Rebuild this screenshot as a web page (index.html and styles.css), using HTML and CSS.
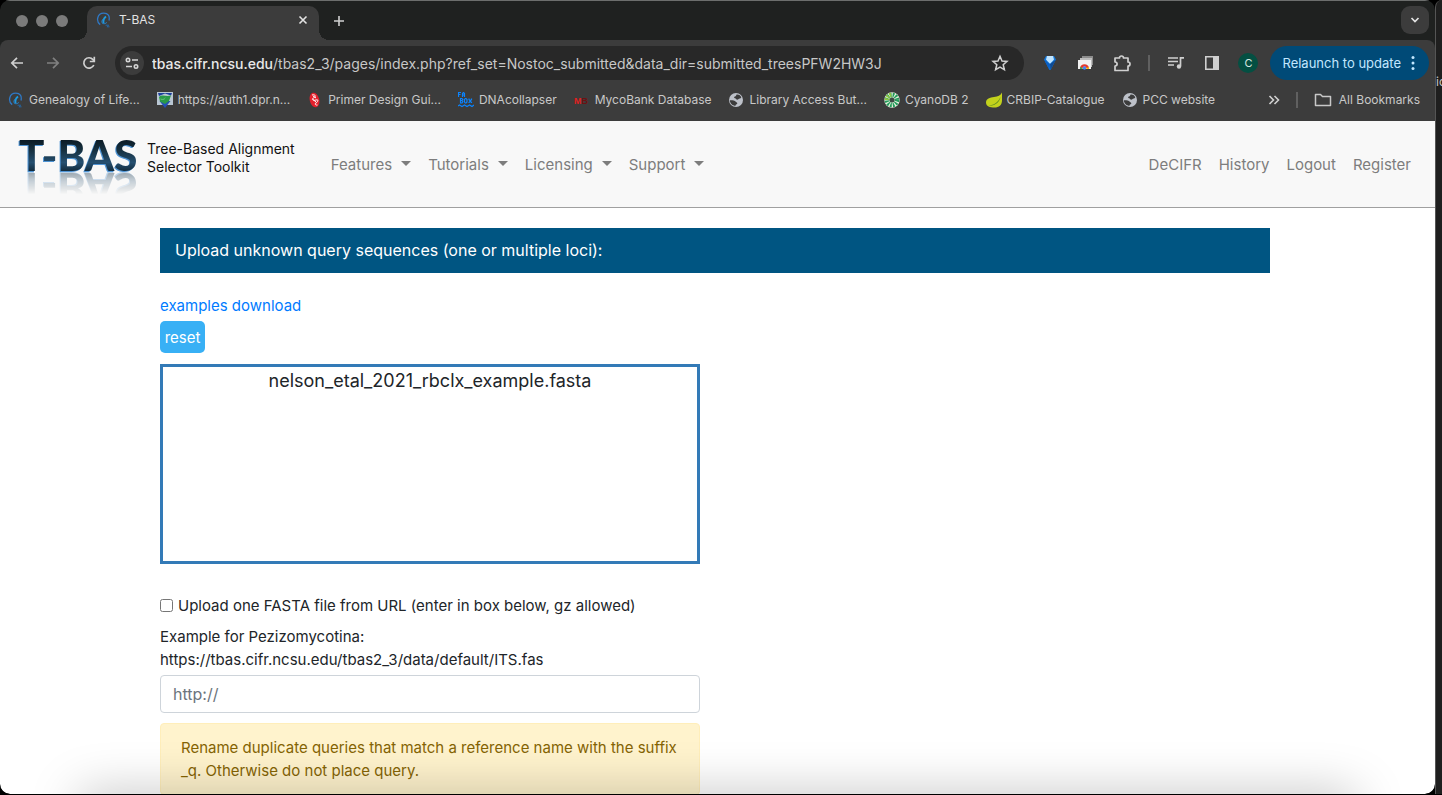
FILE: index.html
```html
<!DOCTYPE html>
<html lang="en">
<head>
<meta charset="utf-8">
<title>T-BAS</title>
<link rel="stylesheet" href="styles.css">
</head>
<body>
<svg class="defs" aria-hidden="true">
  <symbol id="swirl" viewBox="0 0 16 16"><path d="M4.200 12.600C-.2 9.500 1 1.200 7.800 1.200c4.400 0 6.200 3 5.200 7.300" fill="none" stroke="#2f78c4" stroke-width="1.300"/><path d="M10 4.500C8 6 7 8.500 7.600 11.400" fill="none" stroke="#1c9be0" stroke-width="1.800"/><path d="M7.300 7c-1.500 1.200-1.800 3-.8 4.300 1.500.8 3 .4 4.300-.8" fill="none" stroke="#2a86cc" stroke-width="1"/><path d="M9.500 13.200h3.200l-1.800 1.600h2.600" fill="none" stroke="#2466a4" stroke-width="1"/></symbol>
  <symbol id="globe" viewBox="0 0 16 16"><circle cx="8" cy="8" r="7" fill="#bdc1c9"/><path d="M8.600 2.600c2.300-.3 4.100 1.100 4.700 3-.8 1.300-2.200.8-3 1.600-.7.800-1.800.5-2.200-.2-.3-.8-2-.4-2-1.500 0-1.200 1.700-.8 1.900-1.700zM1.800 8.300c2.200-.1 4.900.1 6 1.500.6.800 1.800.8 1.500 1.800-.4 1-1.700.6-1.800 2.200-2.800 0-5.400-2.200-5.700-5.500z" fill="#3c3c3c"/></symbol>
</svg>
<div class="desktop">
  <div class="browser">
    <div class="tabstrip">
      <div class="lights"><span></span><span></span><span></span></div>
      <div class="tab">
        <svg class="fav"><use href="#swirl"/></svg>
        <span class="tab-title">T-BAS</span>
        <button class="ib close" aria-label="Close tab"><svg width="10" height="10" viewBox="0 0 10 10"><path d="M1.500 1.500l7 7M8.500 1.500l-7 7" stroke="#e3e3e3" stroke-width="1.600"/></svg></button>
      </div>
      <button class="ib newtab" aria-label="New tab"><svg width="12" height="12" viewBox="0 0 12 12"><path d="M6 1v10M1 6h10" stroke="#d0d0d0" stroke-width="1.600"/></svg></button>
      <button class="ib tabsearch" aria-label="Search tabs"><svg width="10" height="10" viewBox="0 0 10 10"><path d="M1.500 3L5 6.500 8.500 3" fill="none" stroke="#e3e3e3" stroke-width="1.700"/></svg></button>
    </div>
    <div class="toolbar">
      <div class="nav-buttons">
        <button class="ib" aria-label="Back"><svg width="16" height="16" viewBox="0 0 16 16"><path d="M14 8H3M8 2.800L2.800 8 8 13.200" fill="none" stroke="#d0d0d0" stroke-width="1.700"/></svg></button>
        <button class="ib" aria-label="Forward"><svg width="16" height="16" viewBox="0 0 16 16"><path d="M2 8h11M8 2.800L13.200 8 8 13.200" fill="none" stroke="#808080" stroke-width="1.700"/></svg></button>
        <button class="ib" aria-label="Reload"><svg width="16" height="16" viewBox="0 0 16 16"><path d="M12.800 10A5.200 5.200 0 1 1 12 4.600l1.300 1.500" fill="none" stroke="#d0d0d0" stroke-width="1.700"/><path d="M13.300 1.800v4.700H8.800" fill="none" stroke="#d0d0d0" stroke-width="1.700"/></svg></button>
      </div>
      <div class="omnibox">
        <button class="ib tune" aria-label="Site information"><svg width="14" height="14" viewBox="0 0 14 14"><g fill="none" stroke="#d6d6d6" stroke-width="1.600"><circle cx="3" cy="4" r="1.700"/><path d="M7 4h6M1 10.500h6"/><circle cx="11" cy="10.500" r="1.700"/></g></svg></button>
        <div class="url"><b>tbas.cifr.ncsu.edu</b>/tbas2_3/pages/index.php?ref_set=Nostoc_submitted&amp;data_dir=submitted_treesPFW2HW3J</div>
        <button class="ib star" aria-label="Bookmark this tab"><svg width="18" height="18" viewBox="0 0 18 18"><path d="M9 2.300l2 4.700 5 .4-3.800 3.300 1.200 5L9 13.100l-4.400 2.600 1.200-5L2 7.400 7 7z" fill="none" stroke="#d0d0d0" stroke-width="1.500"/></svg></button>
      </div>
      <div class="ext">
        <button class="ib" aria-label="Gem extension"><svg width="16" height="16" viewBox="0 0 16 16"><path d="M4 1h8l2 3.500L8.500 15h-1L2 4.500z" fill="#1377d8"/><path d="M5 1h6l1 3.500L8 9 4 4.500z" fill="#bfe4ff"/><path d="M2 4.500L8 9l-.5 6z" fill="#0a5fc4"/><path d="M8 9l6-4.500L8.500 15z" fill="#0d4a94"/></svg></button>
        <button class="ib" aria-label="Screen extension"><svg width="18" height="16" viewBox="0 0 18 16"><path d="M5 1h11v9H5z" fill="#8c8c8c"/><path d="M3 3h12v9H3z" fill="#bdbdbd"/><path d="M1 5h13v9H1z" fill="#f2f2f2"/><path d="M3 13a4.600 4.600 0 0 1 9 0l-2.500.5a2 2 0 0 0-4 0z" fill="#e33b2e"/><path d="M3 14v-2l2.500 1v1z" fill="#34a853"/><path d="M12 14v-2l-2.500 1v1z" fill="#fbbc05"/><circle cx="7.500" cy="13" r="1.700" fill="#4285f4"/></svg></button>
        <button class="ib" aria-label="Extensions"><svg width="18" height="18" viewBox="0 0 18 18"><path d="M2 4h4.500a2 2 0 0 1 4 0H15v4a2 2 0 0 1 0 4v4.500H2V12c2.800-.2 2.800-3.800 0-4z" fill="none" stroke="#d0d0d0" stroke-width="1.700" stroke-linejoin="round"/></svg></button>
        <span class="sep"></span>
        <button class="ib" aria-label="Media controls"><svg width="18" height="16" viewBox="0 0 18 16"><path d="M1 3h10M1 6.500h10M1 10h6M13.500 11V2.800H17" fill="none" stroke="#d0d0d0" stroke-width="1.700"/><circle cx="12" cy="11.500" r="2.200" fill="#d0d0d0"/></svg></button>
        <button class="ib" aria-label="Side panel"><svg width="16" height="16" viewBox="0 0 16 16"><path d="M1.800 1.800h12.400v12.400H1.800z" fill="none" stroke="#d0d0d0" stroke-width="1.600"/><path d="M9 1.500h5.500v13H9z" fill="#d0d0d0"/></svg></button>
        <button class="ib" aria-label="Profile"><span class="avatar">C</span></button>
        <button class="relaunch"><span>Relaunch to update</span><svg width="4" height="16" viewBox="0 0 4 16"><g fill="#c2e7ff"><circle cx="2" cy="2.500" r="1.500"/><circle cx="2" cy="8" r="1.500"/><circle cx="2" cy="13.500" r="1.500"/></g></svg></button>
      </div>
    </div>
    <div class="bookmarks">
      <a href="#"><svg class="fav"><use href="#swirl"/></svg><span>Genealogy of Life...</span></a>
      <a href="#"><svg class="fav" viewBox="0 0 16 16"><path d="M0 0h16v13H0z" fill="#b9c6d2"/><path d="M1 1h14l-1 2.500L8 1.500 2 4z" fill="#1d3f9c"/><path d="M2.500 9h11L8 16z" fill="#2450b4"/><path d="M2 5c3-3 7 0 12-1.500l-2 5.500-4 3-5-2.500z" fill="#2a9a48"/><path d="M3 6.500l3 .5 3-2-2 3H4z" fill="#58b870"/></svg><span>https://auth1.dpr.n...</span></a>
      <a href="#"><svg class="fav" viewBox="0 0 16 16"><ellipse cx="7.500" cy="8" rx="4.700" ry="7.500" transform="rotate(-14 7.500 8)" fill="#e3202c"/><path d="M5 3c4-1 4 2 1.500 3S6 9 9 8s2 2 0 3 0 2.500 1.500 2M6 4l3 2M6 7.500l3 2.500" fill="none" stroke="#fff" stroke-width="1"/></svg><span>Primer Design Gui...</span></a>
      <a href="#"><svg class="fav" viewBox="0 0 16 16"><path d="M.5 5V.5H3M.5 2.500h2M4.500 5V1.500l1-1 1 1V5M4.500 3h2M2.500 11V6.500H4l.8 1L4 8.500l.8 1L4 11zM4 8.500H2.500M6.500 7.500v2.500l.8 1h.7l1-1V7.500l-1-1h-.7zM11 6.500v1l2.500 3v.5M13.500 6.500v1l-2.500 3v.5M0 14l1.500-1L4 14.500 6.500 13 9 14.500l2.500-1.500 2.500 1.500 2-1.500" fill="none" stroke="#0a84ff" stroke-width="1.200"/></svg><span>DNAcollapser</span></a>
      <a href="#"><svg class="fav" viewBox="0 0 16 16"><text x="0" y="12" class="mb"><tspan fill="#e02020">M</tspan><tspan fill="#6b1212">B</tspan></text></svg><span>MycoBank Database</span></a>
      <a href="#"><svg class="fav"><use href="#globe"/></svg><span>Library Access But...</span></a>
      <a href="#"><svg class="fav" viewBox="0 0 16 16"><circle cx="8" cy="8" r="7.700" fill="#e8f3df"/><circle cx="8" cy="8" r="5" fill="none" stroke="#239a5b" stroke-width="4.600" stroke-dasharray="1.600 1.020"/><path d="M3 8a5 5 0 0 1 5-5" fill="none" stroke="#8cc63f" stroke-width="4.600" stroke-dasharray="1.600 1.020"/><circle cx="8" cy="8" r="2.500" fill="#3c4a44"/></svg><span>CyanoDB 2</span></a>
      <a href="#"><svg class="fav" viewBox="0 0 16 16"><path d="M16 .5v8c0 4.500-3 7-7.500 7C4 15.500 0 14.500 0 10.500S4 5.500 8 5c4-.5 6.500-1.500 8-4.500z" fill="#c3d21c"/><path d="M1.500 13.500C7 13.500 12 11 14.500 5c-1 5-5 9.500-13 8.500z" fill="#5b8a22"/></svg><span>CRBIP-Catalogue</span></a>
      <a href="#"><svg class="fav"><use href="#globe"/></svg><span>PCC website</span></a>
      <div class="bm-end">
        <button class="ib more" aria-label="More bookmarks"><svg width="12" height="12" viewBox="0 0 12 12"><path d="M1.500 2L5.500 6l-4 4M6.500 2l4 4-4 4" fill="none" stroke="#d0d0d0" stroke-width="1.600"/></svg></button>
        <span class="sep"></span>
        <a href="#"><svg width="18" height="14" viewBox="0 0 18 14"><path d="M1.500 1.500h5l2 2h8v9h-15z" fill="none" stroke="#c8c8c8" stroke-width="1.500" stroke-linejoin="round"/></svg><span>All Bookmarks</span></a>
      </div>
    </div>
    <div class="page">
      <header class="site-header">
        <a class="brand" href="#">
          <svg class="logo" width="120" height="32" viewBox="0 0 120 32">
            <defs><linearGradient id="steel" x1="0" y1="0" x2="0" y2="1"><stop offset="0.200" stop-color="#0b1b26"/><stop offset=".4" stop-color="#16303f"/><stop offset=".65" stop-color="#254f70"/><stop offset=".85" stop-color="#0f2534"/></linearGradient></defs>
            <text x="0" y="32" class="logo-edge">T-BAS</text>
            <text x="1" y="31" class="logo-face">T-BAS</text>
          </svg>
          <span class="tagline">Tree-Based Alignment<br>Selector Toolkit</span>
        </a>
        <nav class="menu">
          <a class="dd" href="#">Features</a><a class="dd" href="#">Tutorials</a><a class="dd" href="#">Licensing</a><a class="dd" href="#">Support</a>
        </nav>
        <nav class="menu account">
          <a href="#">DeCIFR</a><a href="#">History</a><a href="#">Logout</a><a href="#">Register</a>
        </nav>
      </header>
      <main>
        <form class="container">
          <h1 class="banner">Upload unknown query sequences (one or multiple loci):</h1>
          <a class="examples" href="#">examples download</a>
          <button type="button" class="reset">reset</button>
          <div class="dropzone">nelson_etal_2021_rbclx_example.fasta</div>
          <label class="check"><input type="checkbox"><span>Upload one FASTA file from URL (enter in box below, gz allowed)</span></label>
          <label class="hint" for="fasta-url">Example for Pezizomycotina:<br>https://tbas.cifr.ncsu.edu/tbas2_3/data/default/ITS.fas</label>
          <input class="field" id="fasta-url" type="text" placeholder="http://">
          <div class="alert">Rename duplicate queries that match a reference name with the suffix _q. Otherwise do not place query.</div>
        </form>
      </main>
      <div class="dock-shadow"></div>
    </div>
  </div>
  <aside class="behind"><span>ic</span></aside>
</div>
</body>
</html>
```

FILE: styles.css
```css
* { box-sizing: border-box; }
body { margin: 0; background: #000; font-family: Inter, "Liberation Sans", sans-serif; color: #212529; }
button, input { font: inherit; }
a { text-decoration: none; color: inherit; }
svg { display: block; flex: none; }
.defs { position: absolute; width: 0; height: 0; }
.desktop { display: flex; height: 100vh; overflow: hidden; padding-bottom: 1px; }
.browser { flex: 1; min-width: 0; display: flex; flex-direction: column; border-radius: 10px; overflow: hidden; background: #1f2120; }
.behind { width: 7px; overflow: hidden; background: #1f1f1f; border-left: 1px solid #555; border-radius: 8px 0 0; color: #c8c8c8; font-size: 12px; padding-top: 74px; }
.ib { border: 0; padding: 0; background: none; display: flex; align-items: center; justify-content: center; flex: none; }
.fav { width: 16px; height: 16px; }
.sep { width: 2px; height: 16px; background: #606060; flex: none; }

.tabstrip { display: flex; height: 40px; padding: 0 6px 0 16px; border-top: 1px solid #6c6e6d; }
.lights { display: flex; gap: 8px; align-items: center; margin-right: 19px; }
.lights span { width: 12px; height: 12px; border-radius: 50%; background: #7b7b7b; }
.tab { position: relative; display: flex; align-items: center; width: 232px; margin-top: 5px; padding: 0 10px 7px 9px; background: #3c3c3c; border-radius: 10px 10px 0 0; color: #e3e3e3; font-size: 12px; }
.tab::before, .tab::after { content: ""; position: absolute; bottom: 0; width: 10px; height: 10px; }
.tab::before { right: 100%; background: radial-gradient(circle at 0 0, transparent 10px, #3c3c3c 10px); }
.tab::after { left: 100%; background: radial-gradient(circle at 100% 0, transparent 10px, #3c3c3c 10px); }
.tab-title { flex: 1; margin-left: 7px; }
.close { width: 12px; height: 16px; }
.newtab { width: 28px; margin-left: 6px; }
.tabsearch { width: 28px; height: 28px; margin: 5px 0 0 auto; background: #3c3c3c; border-radius: 9px; }

.toolbar { display: flex; align-items: center; height: 46px; background: #3c3c3c; padding-right: 6px; border-radius: 8px 8px 0 0; }
.nav-buttons { display: flex; gap: 2px; margin-right: 9px; }
.nav-buttons .ib { width: 34px; height: 34px; }
.omnibox { flex: 1; min-width: 0; display: flex; align-items: center; height: 34px; padding: 0 15px 0 5px; border-radius: 17px; background: #282828; color: #c7c7c7; font-size: 14px; }
.tune { width: 24px; height: 24px; border-radius: 50%; background: #3c3c3c; }
.url { flex: 1; min-width: 0; margin-left: 8px; white-space: nowrap; overflow: hidden; }
.url b { font-weight: 500; color: #e8e8e8; }
.ext { display: flex; align-items: center; margin-left: 8px; }
.ext .ib { width: 36px; height: 34px; }
.ext .sep { margin: 0 8px; }
.avatar { width: 20px; height: 20px; border-radius: 50%; background: #044f42; color: #d5e8e0; font-size: 11px; line-height: 20px; }
.relaunch { display: flex; align-items: center; gap: 10px; height: 34px; margin-left: 4px; padding: 0 14px 0 12px; border: 0; border-radius: 17px; background: #004a77; color: #c2e7ff; font-size: 13px; white-space: nowrap; }

.bookmarks { display: flex; align-items: center; gap: 17px; height: 35px; padding: 0 15px 8px 8px; background: #3c3c3c; color: #c8c8c8; font-size: 12px; white-space: nowrap; }
.bookmarks a { display: flex; align-items: center; gap: 5px; }
.bm-end { display: flex; align-items: center; margin-left: auto; }
.bm-end .sep { margin: 0 16px; }
.bookmarks .bm-end a { gap: 7px; }
.mb { font: bold 9px "Liberation Sans", sans-serif; }

.page { position: relative; flex: 1; min-height: 0; overflow: hidden; background: #fff; border-radius: 0 0 10px 10px; }
.site-header { display: flex; align-items: center; height: 87px; padding: 0 24px 0 18px; background: #f8f8f8; border-bottom: 1px solid #a0a0a0; }
.brand { display: flex; align-items: flex-start; gap: 9px; height: 48px; color: #111; }
.logo { overflow: visible; -webkit-box-reflect: below 0 linear-gradient(transparent 30%, rgba(0, 0, 0, .4)); }
.logo-edge, .logo-face { font: 900 42px Lato, sans-serif; }
.logo-edge { fill: #4f94d4; }
.logo-face { fill: url(#steel); }
.tagline { font-size: 14px; font-weight: 400; line-height: 18px; white-space: nowrap; }
.menu { display: flex; gap: 17px; margin-left: 36px; font-size: 15px; color: #7d7d7d; white-space: nowrap; }
.dd::after { content: ""; display: inline-block; margin-left: 9px; vertical-align: 4px; border: 5px solid transparent; border-top-color: #7d7d7d; border-bottom: 0; }
.account { margin-left: auto; }

main { padding: 20px 5px 0 0; }
.container { display: flex; flex-direction: column; align-items: flex-start; width: calc(100% - 60px); max-width: 1110px; margin: 0 auto; font-size: 15px; line-height: 23px; }
.banner { width: 100%; margin: 0 0 21px; padding: 11px 15px; background: #005582; color: #fff; font-size: 16px; font-weight: 400; line-height: 23px; }
.examples { color: #007bff; margin-bottom: 4px; }
.reset { width: 45px; height: 32px; padding: 0; border: 0; border-radius: 5px; background: #38b0f5; color: #fff; }
.dropzone { width: 100%; max-width: 540px; height: 200px; margin: 11px 0 30px; border: 3px solid #337ab7; font-size: 18px; line-height: 28px; text-align: center; }
.check { display: flex; align-items: center; gap: 5px; margin-bottom: 8px; }
.check input { width: 13px; height: 13px; margin: 0; }
.hint { margin-bottom: 4px; }
.field { width: 100%; max-width: 540px; height: 38px; padding: 0 12px; border: 1px solid #ced4da; border-radius: 4px; font-size: 16px; }
.field::placeholder { color: #6c757d; }
.alert { width: 100%; max-width: 540px; margin-top: 10px; padding: 12px 20px; border: 1px solid #ffeeba; border-radius: 4px; background: #fff3cd; color: #856404; }
.dock-shadow { position: absolute; left: 80px; right: 80px; bottom: -40px; height: 40px; box-shadow: 0 0 50px rgba(0, 0, 0, .25); pointer-events: none; }
```
